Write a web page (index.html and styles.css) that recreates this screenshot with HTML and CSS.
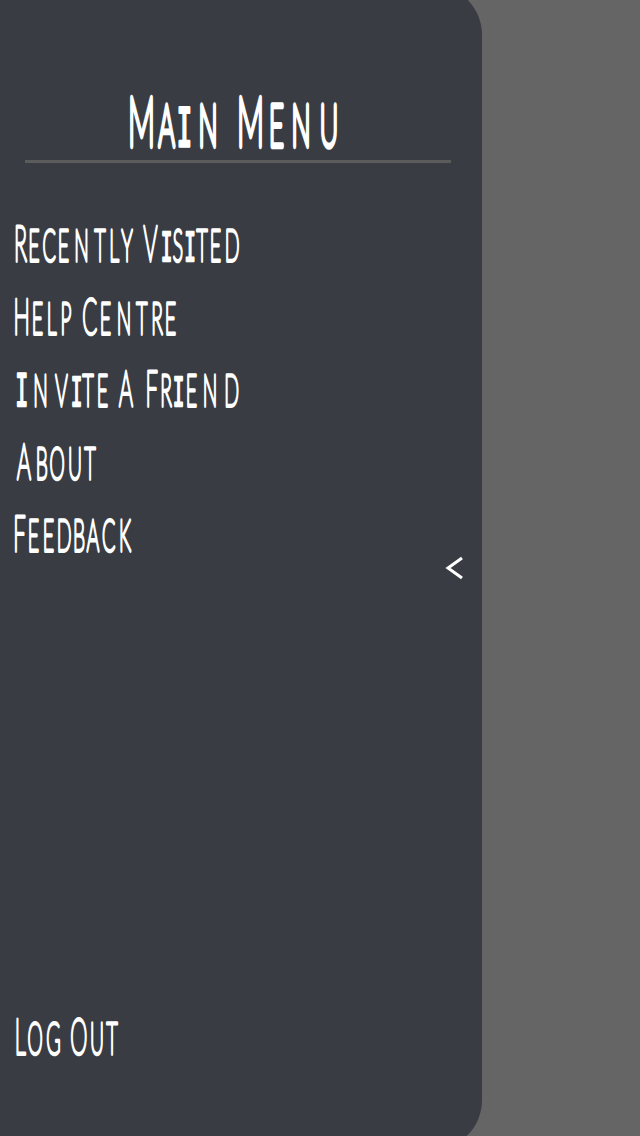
FILE: index.html
```html
<!DOCTYPE html>
<html lang="en">
<head>
<meta charset="utf-8">
<title>Main Menu</title>
<link rel="stylesheet" href="styles.css">
</head>
<body>
<main class="screen">
  <aside class="drawer">
    <h1 class="title">
      <svg class="lettering" viewBox="0 0 482 80" width="482" height="80">
        <g transform="translate(0 66) scale(1 2.27)">
          <text x="141.5 166.5 184.5 208"><tspan class="cap">M</tspan>A<tspan class="slab">I</tspan>N</text>
          <text x="250.5 276.5 301 329"><tspan class="cap">M</tspan>ENU</text>
        </g>
      </svg>
    </h1>
    <nav class="menu">
      <a class="item"><svg class="lettering" viewBox="0 0 300 60" width="300" height="60"><g transform="translate(0 47) scale(1 2.27)">
        <text x="20.5 34 49 63.5 81.5 100 114 127"><tspan class="cap">R</tspan>ECENTLY</text>
        <text x="150.5 166.5 178 190 202 215.5 232"><tspan class="cap">V</tspan><tspan class="slab">I</tspan>S<tspan class="slab">I</tspan>TED</text>
      </g></svg></a>
      <a class="item"><svg class="lettering" viewBox="0 0 300 60" width="300" height="60"><g transform="translate(0 47) scale(1 2.27)">
        <text x="21.7 37.5 51.5 66"><tspan class="cap">H</tspan>ELP</text>
        <text x="89.7 105.5 124 141.7 157 170.5"><tspan class="cap">C</tspan>ENTRE</text>
      </g></svg></a>
      <a class="item"><svg class="lettering" viewBox="0 0 300 60" width="300" height="60"><g transform="translate(0 46.5) scale(1 2.27)">
        <text x="21.7 40.5 61.5 76.5 88 102.5"><tspan class="cap slab">I</tspan>NV<tspan class="slab">I</tspan>TE</text>
        <text x="126"><tspan class="cap">A</tspan></text>
        <text x="151.7 166 178.5 191.5 210 231.5"><tspan class="cap">F</tspan>R<tspan class="slab">I</tspan>END</text>
      </g></svg></a>
      <a class="item"><svg class="lettering" viewBox="0 0 300 60" width="300" height="60"><g transform="translate(0 47) scale(1 2.27)">
        <text x="24 41.7 57 75 90"><tspan class="cap">A</tspan>BOUT</text>
      </g></svg></a>
      <a class="item"><svg class="lettering" viewBox="0 0 300 60" width="300" height="60"><g transform="translate(0 47) scale(1 2.27)">
        <text x="19.5 33.5 48.5 64 79 93 108.5 125"><tspan class="cap">F</tspan>EEDBACK</text>
      </g></svg></a>
    </nav>
    <svg class="chevron" viewBox="0 0 20 26" width="20" height="26"><path d="M17 3 3 13l14 10"/></svg>
    <a class="item logout"><svg class="lettering" viewBox="0 0 300 60" width="300" height="60"><g transform="translate(0 46.5) scale(1 2.27)">
      <text x="20.2 35 53.3"><tspan class="cap">L</tspan>OG</text>
      <text x="78.7 97 112"><tspan class="cap">O</tspan>UT</text>
    </g></svg></a>
  </aside>
</main>
</body>
</html>
```
FILE: styles.css
```css
body {
  margin: 0;
  background: #656566;
}

.screen {
  height: 1136px;
  display: flex;
  overflow: hidden;
}

.drawer {
  box-sizing: border-box;
  width: 482px;
  height: 1165px;
  margin-top: -15px;
  padding-top: 95px;
  border-radius: 0 50px 50px 0;
  background: #3a3c43;
  display: flex;
  flex-direction: column;
}

.title {
  height: 83px;
  margin: 0;
  font-size: 25.5px;
  background: linear-gradient(#5d5c5d, #5d5c5d) 25px 80px / 426px 3px no-repeat;
}

.title .cap {
  font-size: 30.3px;
}

.menu {
  display: flex;
  flex-direction: column;
  gap: 12.5px;
  margin-top: 51px;
}

.item {
  height: 60px;
  font-size: 19.4px;
}

.item .cap {
  font-size: 21.8px;
}

.lettering {
  display: block;
  overflow: visible;
}

.lettering text {
  font-family: Lato, "Open Sans", sans-serif;
  font-weight: 100;
  text-anchor: middle;
  text-rendering: geometricPrecision;
  fill: #fff;
  stroke: #fff;
  stroke-width: 1.7px;
  stroke-linejoin: round;
  vector-effect: non-scaling-stroke;
}

.title .lettering text {
  stroke-width: 2.8px;
}

.lettering .slab {
  font-family: "Liberation Mono", monospace;
  stroke-width: 1px;
}

.title .lettering .slab {
  stroke-width: 1.6px;
}

.chevron {
  align-self: flex-end;
  margin: -9px 17px 0 0;
  fill: none;
  stroke: #fff;
  stroke-width: 3;
}

.logout {
  margin-top: 426px;
}
```
